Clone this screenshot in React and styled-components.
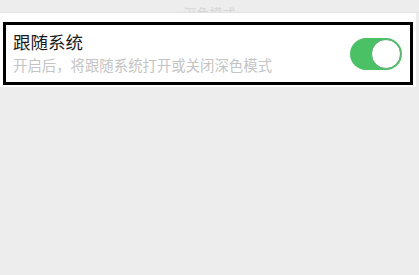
import React from "react";
import styled, { createGlobalStyle } from "styled-components";

const Global = createGlobalStyle`
  html, body { margin: 0; padding: 0; background: #ededed; }
  body { font-family: "Noto Sans CJK SC", "Noto Sans", sans-serif; }
`;

const Page = styled.div`
  width: 419px;
  height: 275px;
  background: #ededed;
  display: flex;
  flex-direction: column;
  overflow: hidden;
`;

const TopStrip = styled.div`
  height: 12px;
  border-bottom: 1px solid #e2e2e2;
  display: flex;
  justify-content: center;
  align-items: flex-end;
  overflow: hidden;
`;

const Hint = styled.span`
  font-size: 13px;
  color: #d6d6d6;
  line-height: 13px;
  transform: translateY(7px);
`;

const Section = styled.div`
  background: #fff;
  margin-right: 3px;
  padding: 9px 3px 2px 3px;
`;

const Highlight = styled.div`
  border: 3px solid #000;
  display: flex;
  align-items: center;
  justify-content: space-between;
  padding: 6px 8px 7px 7px;
`;

const Texts = styled.div`
  display: flex;
  flex-direction: column;
`;

const Title = styled.div`
  font-size: 17.5px;
  line-height: 22px;
  color: #1a1a1a;
`;

const Sub = styled.div`
  font-size: 14.4px;
  line-height: 20px;
  color: #c4c4c4;
  margin-top: 2px;
`;

const Switch = styled.div`
  width: 52px;
  height: 32px;
  border-radius: 16px;
  background: #4ac164;
  position: relative;
  margin-top: 2px;
`;

const Knob = styled.div`
  position: absolute;
  right: 1px;
  top: 1px;
  width: 28px;
  height: 28px;
  border-radius: 50%;
  background: #fff;
  border: 1px solid #5aa872;
`;

export default function App() {
  return (
    <Page>
      <Global />
      <TopStrip>
        <Hint>深色模式</Hint>
      </TopStrip>
      <Section>
        <Highlight>
          <Texts>
            <Title>跟随系统</Title>
            <Sub>开启后，将跟随系统打开或关闭深色模式</Sub>
          </Texts>
          <Switch>
            <Knob />
          </Switch>
        </Highlight>
      </Section>
    </Page>
  );
}
